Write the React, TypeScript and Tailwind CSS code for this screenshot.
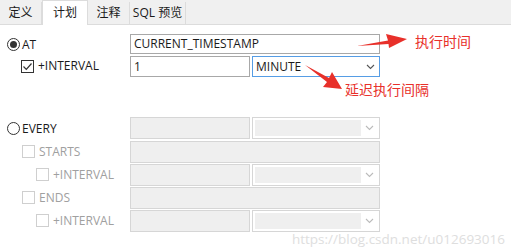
import React from "react";

const FONT = { fontFamily: '"Open Sans", "Noto Sans CJK SC", sans-serif' };

const TABS = ["定义", "计划", "注释", "SQL 预览"];

function Radio({ checked }: { checked?: boolean }) {
  return (
    <span className="flex h-[13px] w-[13px] items-center justify-center rounded-full border border-[#333] bg-white">
      {checked && <span className="h-[7px] w-[7px] rounded-full bg-[#333]" />}
    </span>
  );
}

function Check({ checked, disabled }: { checked?: boolean; disabled?: boolean }) {
  return (
    <span
      className={
        disabled
          ? "flex h-[13px] w-[13px] border border-[#cfcfcf] bg-white"
          : "flex h-[13px] w-[13px] items-center justify-center border border-[#333] bg-white"
      }
    >
      {checked && (
        <svg width="11" height="11" viewBox="0 0 11 11">
          <path d="M1.5 5.5 L4.3 8.3 L9.5 2.5" fill="none" stroke="#333" strokeWidth="1.2" />
        </svg>
      )}
    </span>
  );
}

function Chevron({ color }: { color: string }) {
  return (
    <svg width="9" height="6" viewBox="0 0 9 6">
      <path d="M1 1 L4.5 4.5 L8 1" fill="none" stroke={color} strokeWidth="1.1" />
    </svg>
  );
}

function DisabledBox({ className = "" }: { className?: string }) {
  return <div className={`h-[22px] border border-[#d6d6d6] bg-[#efefef] ${className}`} />;
}

function DisabledSelect() {
  return (
    <div className="flex h-[22px] items-center border border-[#d6d6d6] bg-white p-[2px]">
      <div className="h-full flex-1 bg-[#efefef]" />
      <span className="flex w-[16px] justify-center">
        <Chevron color="#bbb" />
      </span>
    </div>
  );
}

function PairRow() {
  return (
    <div className="grid grid-cols-[120px_128px] gap-[2px]">
      <DisabledBox />
      <DisabledSelect />
    </div>
  );
}

export default function App() {
  return (
    <div className="relative h-[249px] w-[511px] overflow-hidden bg-white text-[12px] text-[#1a1a1a]" style={FONT}>
      {/* tabs */}
      <div className="flex h-[25px] items-end border-b border-[#dcdcdc] bg-[#f0f0f0]">
        {TABS.map((t, i) =>
          i === 1 ? (
            <div
              key={t}
              className="-mb-px flex h-[25px] w-[46px] items-center justify-center border border-b-0 border-[#dcdcdc] bg-white"
            >
              {t}
            </div>
          ) : (
            <div
              key={t}
              className={`flex h-[22px] items-center justify-center border-r border-[#dcdcdc] ${
                t === "SQL 预览" ? "w-[56px]" : "w-[42px]"
              }`}
            >
              {t}
            </div>
          ),
        )}
      </div>

      <div className="grid grid-cols-[130px_250px] pt-[9px]">
        {/* AT */}
        <div className="flex h-[21px] items-center gap-[2px] pl-[7px]">
          <Radio checked />
          <span>AT</span>
        </div>
        <div className="flex h-[20px] items-center border border-[#a8a8a8] px-[3px]">CURRENT_TIMESTAMP</div>

        <div className="flex h-[22px] items-center gap-[4px] pl-[21px]">
          <Check checked />
          <span>+INTERVAL</span>
        </div>
        <div className="mt-px grid grid-cols-[120px_128px] gap-[2px]">
          <div className="flex h-[21px] items-center border border-[#a8a8a8] px-[3px]">1</div>
          <div className="flex h-[21px] items-center justify-between border border-[#569de5] pl-[3px] pr-[4px]">
            <span>MINUTE</span>
            <Chevron color="#555" />
          </div>
        </div>

        <div className="col-span-2 h-[40px]" />

        {/* EVERY */}
        <div className="flex h-[23px] items-center gap-[2px] pl-[7px]">
          <Radio />
          <span>EVERY</span>
        </div>
        <PairRow />

        <div className="flex h-[23px] items-center gap-[4px] pl-[22px] text-[#a0a0a0]">
          <Check disabled />
          <span>STARTS</span>
        </div>
        <DisabledBox className="mt-px" />

        <div className="flex h-[23px] items-center gap-[4px] pl-[36px] text-[#a0a0a0]">
          <Check disabled />
          <span>+INTERVAL</span>
        </div>
        <div className="mt-px">
          <PairRow />
        </div>

        <div className="flex h-[23px] items-center gap-[4px] pl-[22px] text-[#a0a0a0]">
          <Check disabled />
          <span>ENDS</span>
        </div>
        <DisabledBox className="mt-px" />

        <div className="flex h-[23px] items-center gap-[4px] pl-[36px] text-[#a0a0a0]">
          <Check disabled />
          <span>+INTERVAL</span>
        </div>
        <div className="mt-px">
          <PairRow />
        </div>
      </div>

      {/* annotations */}
      <svg className="absolute left-0 top-0" width="511" height="249" viewBox="0 0 511 249">
        <path d="M357 46 L388 40.5 L386 34 L407 39 L389 48 L388.5 44 Z" fill="#e8302a" />
        <path d="M305 65 L329 78 L332 72 L342 89 L323 87 L327 82 Z" fill="#e8302a" />
      </svg>
      <span className="absolute left-[415px] top-[31px] text-[14px] text-[#e8302a]">执行时间</span>
      <span className="absolute left-[345px] top-[79px] text-[14px] text-[#e8302a]">延迟执行间隔</span>
      <span className="absolute right-[6px] top-[229px] text-[13.5px] text-[#dedede]">https://blog.csdn.net/u012693016</span>
    </div>
  );
}
